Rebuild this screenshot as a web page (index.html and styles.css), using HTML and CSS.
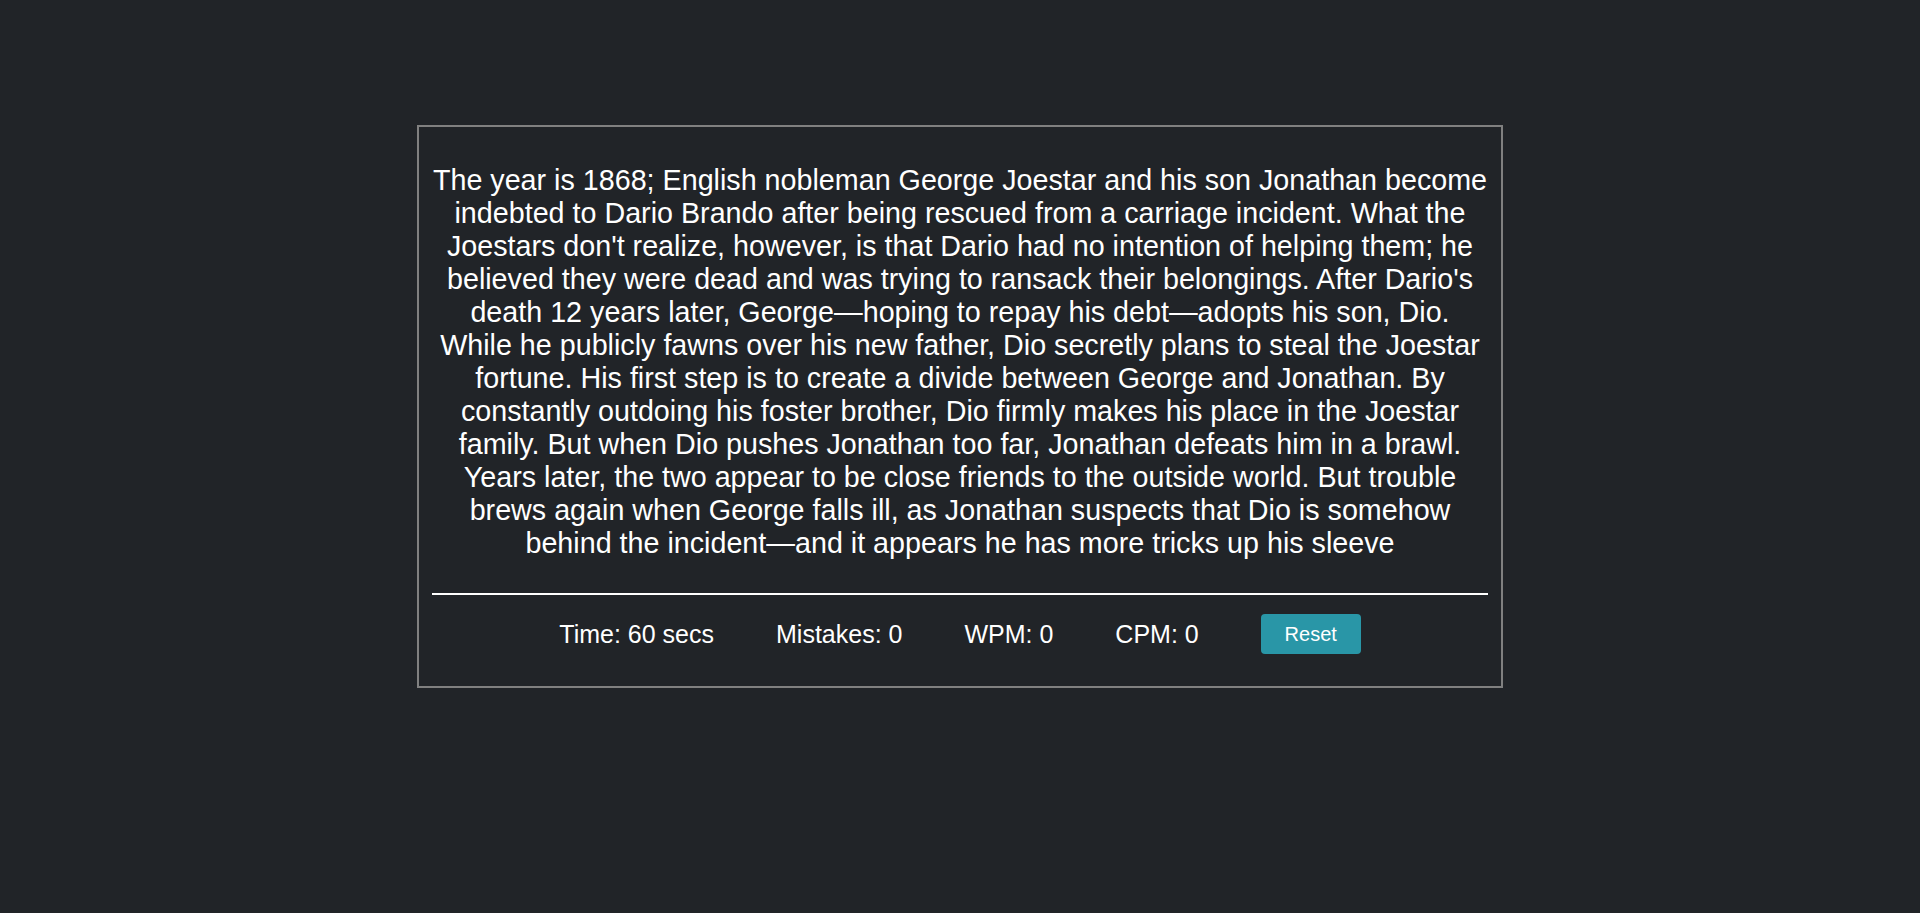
FILE: index.html
```html
<!DOCTYPE html>
<html lang="en">
<head>
<meta charset="utf-8">
<title>Typing Speed Test</title>
<link rel="stylesheet" href="styles.css">
</head>
<body>
<main class="page">
  <section class="wrapper">
    <div class="typing-text">
      <p>The year is 1868; English nobleman George Joestar and his son Jonathan become indebted to Dario Brando after being rescued from a carriage incident. What the Joestars don't realize, however, is that Dario had no intention of helping them; he believed they were dead and was trying to ransack their belongings. After Dario's death 12 years later, George—hoping to repay his debt—adopts his son, Dio. While he publicly fawns over his new father, Dio secretly plans to steal the Joestar fortune. His first step is to create a divide between George and Jonathan. By constantly outdoing his foster brother, Dio firmly makes his place in the Joestar family. But when Dio pushes Jonathan too far, Jonathan defeats him in a brawl. Years later, the two appear to be close friends to the outside world. But trouble brews again when George falls ill, as Jonathan suspects that Dio is somehow behind the incident—and it appears he has more tricks up his sleeve</p>
    </div>
    <div class="content">
      <ul class="result-details">
        <li class="time">Time: <span>60</span> secs</li>
        <li class="mistake">Mistakes: <span>0</span></li>
        <li class="wpm">WPM: <span>0</span></li>
        <li class="cpm">CPM: <span>0</span></li>
        <li><button class="reset-btn">Reset</button></li>
      </ul>
    </div>
  </section>
</main>
</body>
</html>
```
FILE: styles.css
```css
* {
  box-sizing: border-box;
}

html, body {
  margin: 0;
  padding: 0;
}

body {
  background: #212428;
  color: #ffffff;
  font-family: "Liberation Sans", Arial, sans-serif;
}

.page {
  display: flex;
  justify-content: center;
  padding-top: 125px;
}

.wrapper {
  width: 1086px;
  border: 2px solid #808080;
  padding: 0 13px;
}

.typing-text {
  padding-top: 37px;
  padding-bottom: 33px;
  border-bottom: 2px solid #ffffff;
}

.typing-text p {
  margin: 0;
  font-size: 28.7px;
  line-height: 33px;
  text-align: center;
}

.content {
  padding: 19px 0 32px;
}

.result-details {
  list-style: none;
  margin: 0;
  padding: 0;
  display: flex;
  justify-content: center;
  align-items: center;
}

.result-details li {
  margin: 0 31px;
  font-size: 25px;
  line-height: 29px;
}

.reset-btn {
  display: block;
  width: 100px;
  height: 40px;
  border: none;
  border-radius: 4px;
  background: #2996a7;
  color: #ffffff;
  font-family: "Liberation Sans", Arial, sans-serif;
  font-size: 20px;
  padding: 0;
  cursor: pointer;
}
```
